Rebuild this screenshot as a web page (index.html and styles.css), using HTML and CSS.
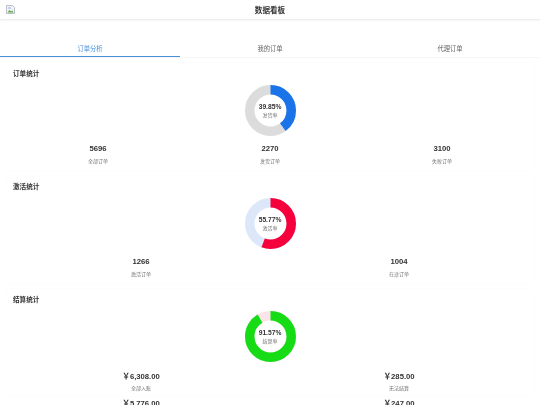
FILE: index.html
```html
<!DOCTYPE html>
<html>
<head>
  <meta charset="utf-8">
  <title>数据看板</title>
  <link rel="stylesheet" href="styles.css">
</head>
<body>
  <header class="navbar">
    <svg class="broken-img" width="9" height="9" viewBox="0 0 9 9">
      <path d="M0.5 0.5H6.5L8.5 2.5V8.5H0.5Z" fill="#f2f4f7" stroke="#a9b0b8" stroke-width="0.8"/>
      <path d="M1.5 7.5L3.5 5L5 6.5L6.5 5.5L7.5 7.5Z" fill="#5aa846"/>
      <path d="M2 2H5V4H2Z" fill="#c3d3e8"/>
    </svg>
    <div class="navbar-title">数据看板</div>
  </header>

  <nav class="tabs">
    <div class="tab active">订单分析</div>
    <div class="tab">我的订单</div>
    <div class="tab">代理订单</div>
  </nav>

  <section class="card">
    <div class="card-title">订单统计</div>
    <div class="chart">
      <svg class="ring" viewBox="0 0 51 51">
        <circle class="track" cx="25.5" cy="25.5" r="20.75" stroke="#dcdcdc"/>
        <circle class="arc" cx="25.5" cy="25.5" r="20.75" stroke="#1a73e8" pathLength="100" stroke-dasharray="39.85 100"/>
      </svg>
      <div class="chart-text">
        <div class="chart-value">39.85%</div>
        <div class="chart-label">发货率</div>
      </div>
    </div>
    <div class="stats cols-3">
      <div class="stat"><div class="stat-value">5696</div><div class="stat-label">全部订单</div></div>
      <div class="stat"><div class="stat-value">2270</div><div class="stat-label">发货订单</div></div>
      <div class="stat"><div class="stat-value">3100</div><div class="stat-label">失败订单</div></div>
    </div>
  </section>

  <section class="card">
    <div class="card-title">激活统计</div>
    <div class="chart">
      <svg class="ring" viewBox="0 0 51 51">
        <circle class="track" cx="25.5" cy="25.5" r="20.75" stroke="#dce8fa"/>
        <circle class="arc" cx="25.5" cy="25.5" r="20.75" stroke="#f5003c" pathLength="100" stroke-dasharray="55.77 100"/>
      </svg>
      <div class="chart-text">
        <div class="chart-value">55.77%</div>
        <div class="chart-label">激活率</div>
      </div>
    </div>
    <div class="stats cols-2">
      <div class="stat"><div class="stat-value">1266</div><div class="stat-label">激活订单</div></div>
      <div class="stat"><div class="stat-value">1004</div><div class="stat-label">在途订单</div></div>
    </div>
  </section>

  <section class="card">
    <div class="card-title">结算统计</div>
    <div class="chart">
      <svg class="ring" viewBox="0 0 51 51">
        <circle class="track" cx="25.5" cy="25.5" r="20.75" stroke="#fbe4e8"/>
        <circle class="arc" cx="25.5" cy="25.5" r="20.75" stroke="#16dc16" pathLength="100" stroke-dasharray="91.57 100"/>
      </svg>
      <div class="chart-text">
        <div class="chart-value">91.57%</div>
        <div class="chart-label">结算率</div>
      </div>
    </div>
    <div class="stats cols-2 money">
      <div class="stat"><div class="stat-value">￥6,308.00</div><div class="stat-label">全部入账</div></div>
      <div class="stat"><div class="stat-value">￥285.00</div><div class="stat-label">无法结算</div></div>
      <div class="stat"><div class="stat-value">￥5,776.00</div></div>
      <div class="stat"><div class="stat-value">￥247.00</div></div>
    </div>
  </section>
</body>
</html>
```

FILE: styles.css
```css
html,
body {
  height: 405px;
  overflow: hidden;
}

body {
  margin: 0;
  background-color: #fff;
  color: #333;
  font-family: "Liberation Sans", "Noto Sans CJK SC", sans-serif;
  /* the reference is a soft, upscaled capture */
  filter: blur(0.35px);
}

.navbar {
  display: flex;
  align-items: center;
  justify-content: center;
  position: relative;
  height: 19px;
  box-shadow: 0 1px 2px rgba(0, 0, 0, 0.1);
}

.broken-img {
  position: absolute;
  left: 6px;
  top: 5px;
}

.navbar-title {
  font-size: 7.6px;
  font-weight: bold;
}

.tabs {
  display: flex;
  margin-top: 20px;
  box-shadow: 0 1px 1px rgba(0, 0, 0, 0.03);
}

.tab {
  flex: 1;
  height: 17px;
  line-height: 19px;
  text-align: center;
  font-size: 6.3px;
  color: #666;
  border-bottom: 1px solid transparent;
}

.tab.active {
  color: #4a90d9;
  border-bottom-color: #4a90d9;
}

.card {
  margin: 6px 6px 0;
  padding: 6px 6px 0;
  height: 101px;
  border-radius: 4px;
  box-shadow: 0 0 2px rgba(0, 0, 0, 0.04);
}

.card-title {
  padding-left: 1px;
  font-size: 6.6px;
  font-weight: bold;
  line-height: 10px;
}

.chart {
  position: relative;
  width: 51px;
  height: 51px;
  margin: 6px auto 0;
}

.ring {
  display: block;
  width: 51px;
  height: 51px;
}

.ring circle {
  fill: none;
  stroke-width: 9.5;
}

.arc {
  transform: rotate(-90deg);
  transform-origin: center;
}

.chart-text {
  position: absolute;
  left: 0;
  right: 0;
  top: 17px;
  text-align: center;
}

.chart-value {
  font-size: 6.7px;
  font-weight: bold;
  line-height: 9px;
}

.chart-label {
  font-size: 5px;
  line-height: 8px;
  color: #777;
}

.stats {
  display: grid;
  margin-top: 7px;
  text-align: center;
}

.cols-3 {
  grid-template-columns: repeat(3, 1fr);
}

.cols-2 {
  grid-template-columns: repeat(2, 1fr);
}

.money {
  margin-top: 9px;
}

.money .stat {
  height: 27px;
}

.money .stat-label {
  margin-top: 1px;
}

.stat-value {
  font-size: 7.7px;
  font-weight: bold;
  line-height: 12px;
}

.stat-label {
  margin-top: 2px;
  font-size: 5px;
  line-height: 8px;
  color: #777;
}
```
